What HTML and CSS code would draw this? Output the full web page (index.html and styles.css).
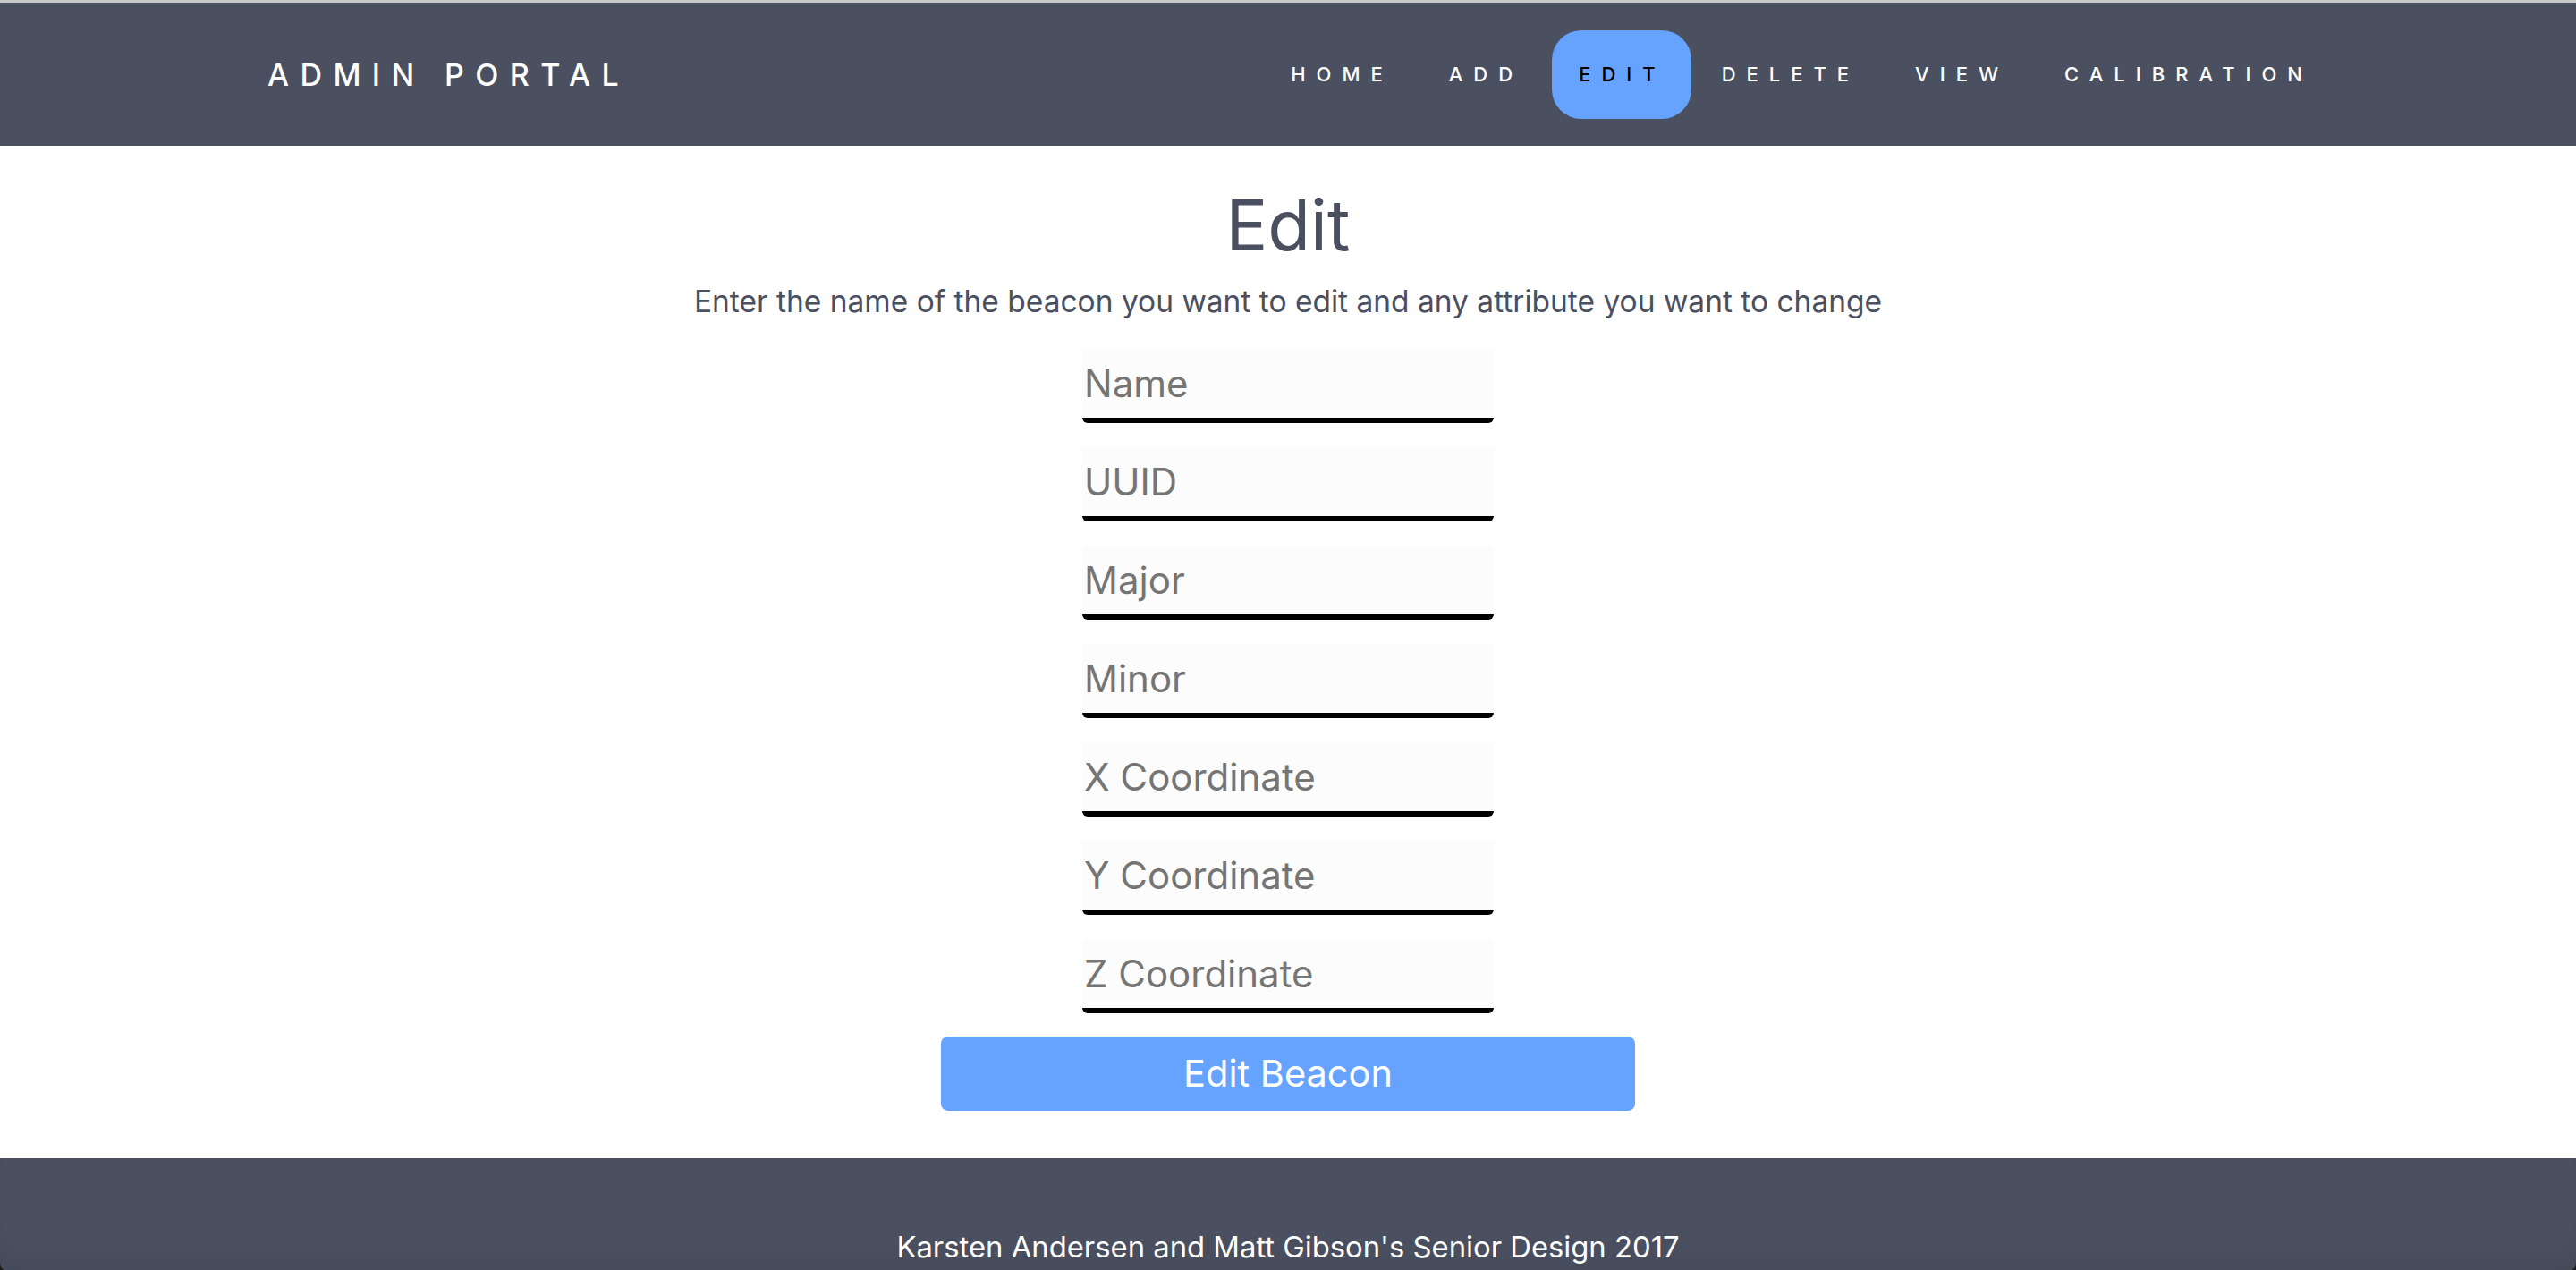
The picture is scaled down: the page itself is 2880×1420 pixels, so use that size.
FILE: index.html
```html
<!DOCTYPE html>
<html lang="en">
<head>
<meta charset="utf-8">
<title>Admin Portal - Edit</title>
<link rel="stylesheet" href="styles.css">
</head>
<body>
<header class="topbar">
  <a class="brand" href="#">ADMIN PORTAL</a>
  <nav class="nav">
    <a class="nav-link" href="#">HOME</a>
    <a class="nav-link" href="#">ADD</a>
    <a class="nav-link active" href="#">EDIT</a>
    <a class="nav-link" href="#">DELETE</a>
    <a class="nav-link" href="#">VIEW</a>
    <a class="nav-link" href="#">CALIBRATION</a>
  </nav>
</header>
<main class="content">
  <h1 class="title">Edit</h1>
  <p class="subtitle">Enter the name of the beacon you want to edit and any attribute you want to change</p>
  <form class="form">
    <input class="field" type="text" placeholder="Name">
    <input class="field" type="text" placeholder="UUID">
    <input class="field" type="text" placeholder="Major">
    <input class="field" type="text" placeholder="Minor">
    <input class="field" type="text" placeholder="X Coordinate">
    <input class="field" type="text" placeholder="Y Coordinate">
    <input class="field" type="text" placeholder="Z Coordinate">
    <button class="submit" type="button">Edit Beacon</button>
  </form>
</main>
<div class="foot-wrap">
  <footer class="footer">Karsten Andersen and Matt Gibson's Senior Design 2017</footer>
</div>
</body>
</html>
```
FILE: styles.css
```css
html, body {
  margin: 0;
  padding: 0;
  background: #ffffff;
}
body {
  font-family: Inter, "Liberation Sans", sans-serif;
  color: #4a5060;
}
.topbar {
  box-sizing: border-box;
  height: 163px;
  border-top: 3px solid #c9c9c9;
  background: #4a5060;
  display: flex;
  align-items: center;
  justify-content: space-between;
  padding: 0 266px 0 299px;
}
.brand {
  color: #ffffff;
  text-decoration: none;
  font-size: 34px;
  font-weight: 500;
  letter-spacing: 12.4px;
}
.nav {
  display: flex;
  align-items: center;
  gap: 4px;
}
.nav-link {
  display: flex;
  align-items: center;
  height: 99px;
  padding: 0 28px 0 30px;
  border-radius: 33px;
  color: #ffffff;
  text-decoration: none;
  font-size: 22px;
  font-weight: 500;
  letter-spacing: 12px;
}
.nav-link.active {
  background: #66a3ff;
  color: #000000;
}
.content {
  display: flex;
  flex-direction: column;
  align-items: center;
  padding-top: 50px;
}
.title {
  margin: 0;
  font-size: 78px;
  line-height: 1;
  font-weight: 400;
  color: #4a5060;
}
.subtitle {
  margin: 30px 0 0;
  font-size: 33.5px;
  line-height: 1;
  color: #4a5060;
}
.form {
  display: flex;
  flex-direction: column;
  align-items: center;
  margin-top: 35px;
}
.field {
  box-sizing: border-box;
  width: 460px;
  height: 83px;
  margin: 0 0 27px;
  padding: 0 2px;
  border: none;
  border-bottom: 6px solid #000000;
  border-radius: 0 0 6px 6px;
  background: #fcfcfc;
  font-family: Inter, "Liberation Sans", sans-serif;
  font-size: 42px;
  color: #333333;
  outline: none;
}
.field::placeholder {
  color: #757575;
}
.submit {
  width: 776px;
  height: 83px;
  margin: -1px 0 0;
  border: none;
  border-radius: 8px;
  background: #66a3ff;
  color: #ffffff;
  font-family: Inter, "Liberation Sans", sans-serif;
  font-size: 41.5px;
  cursor: pointer;
}
.foot-wrap {
  margin-top: 53px;
  background: #1b1b1b;
}
.footer {
  box-sizing: border-box;
  height: 127px;
  padding-top: 83px;
  background: #4a5060;
  border-radius: 0 0 10px 10px;
  box-shadow: inset 0 -20px 40px -20px rgba(0, 0, 0, 0.12);
  color: #ffffff;
  text-align: center;
  font-size: 32.8px;
  line-height: 1;
}
```
